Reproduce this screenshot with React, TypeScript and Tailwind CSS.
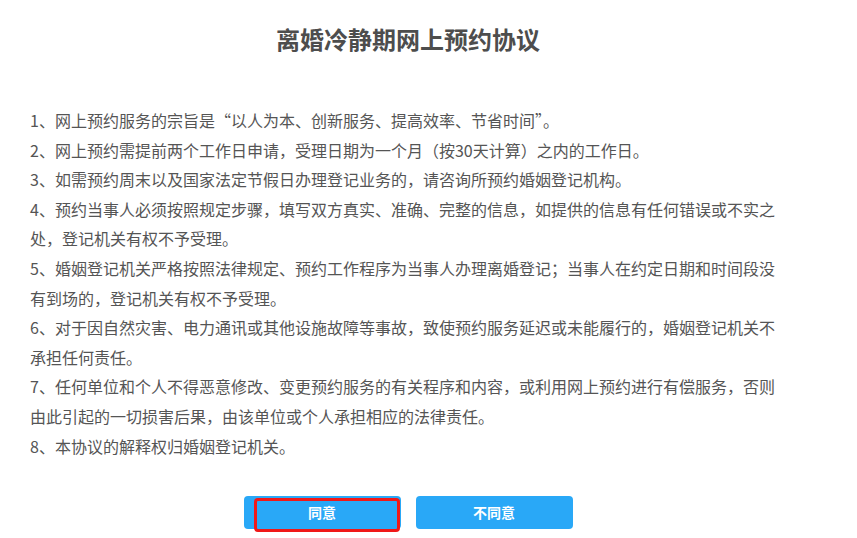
import React from "react";

const items = [
  "1、网上预约服务的宗旨是“以人为本、创新服务、提高效率、节省时间”。",
  "2、网上预约需提前两个工作日申请，受理日期为一个月（按30天计算）之内的工作日。",
  "3、如需预约周末以及国家法定节假日办理登记业务的，请咨询所预约婚姻登记机构。",
  "4、预约当事人必须按照规定步骤，填写双方真实、准确、完整的信息，如提供的信息有任何错误或不实之处，登记机关有权不予受理。",
  "5、婚姻登记机关严格按照法律规定、预约工作程序为当事人办理离婚登记；当事人在约定日期和时间段没有到场的，登记机关有权不予受理。",
  "6、对于因自然灾害、电力通讯或其他设施故障等事故，致使预约服务延迟或未能履行的，婚姻登记机关不承担任何责任。",
  "7、任何单位和个人不得恶意修改、变更预约服务的有关程序和内容，或利用网上预约进行有偿服务，否则由此引起的一切损害后果，由该单位或个人承担相应的法律责任。",
  "8、本协议的解释权归婚姻登记机关。",
];

export default function App() {
  return (
    <div
      className="w-[857px] h-[538px] bg-white overflow-hidden"
      style={{ fontFamily: '"Microsoft YaHei", "Noto Sans CJK SC", sans-serif' }}
    >
      <div className="ml-[30px] w-[756px] pt-[23px]">
        <h1 className="text-center text-[24px] leading-[32px] font-bold text-[#4d4d4d]">
          离婚冷静期网上预约协议
        </h1>
        <div className="mt-[51px] text-[16px] leading-[29.6px] text-[#555555]">
          {items.map((t) => (
            <p key={t}>{t}</p>
          ))}
        </div>
        <div className="mt-[35px] flex justify-center gap-[15px]">
          <div className="relative">
            <button className="w-[157px] h-[33px] rounded-[4px] bg-[#29a8f7] text-white text-[14px] font-bold">
              同意
            </button>
            <div className="absolute left-[10px] top-[2px] w-[146px] h-[34px] rounded-[4px] border-[3px] border-[#f01818] pointer-events-none" />
          </div>
          <button className="w-[157px] h-[33px] rounded-[4px] bg-[#29a8f7] text-white text-[14px] font-bold">
            不同意
          </button>
        </div>
      </div>
    </div>
  );
}
